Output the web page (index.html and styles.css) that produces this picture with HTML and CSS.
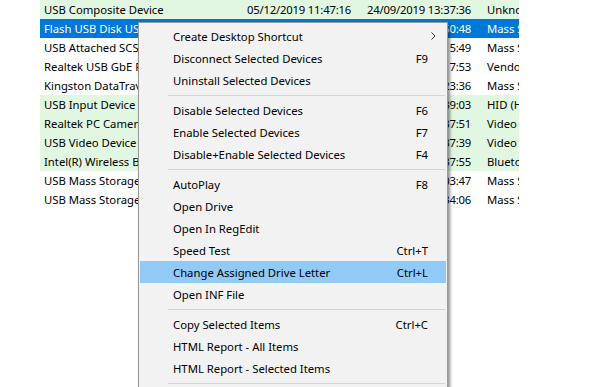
FILE: index.html
```html
<!DOCTYPE html>
<html lang="en">
<head>
    <meta charset="UTF-8">
    <title>USB Devices</title>
    <link rel="stylesheet" href="styles.css">
</head>
<body>
<div class="list">
    <div class="row green"><span class="cell">USB Composite Device</span><span class="cell date">05/12/2019 11:47:16</span><span class="cell date">24/09/2019 13:37:36</span><span class="cell">Unknown</span></div>
    <div class="row selected"><span class="cell">Flash USB Disk USB Device</span><span class="cell date">05/12/2019 11:50:40</span><span class="cell date">05/12/2019 11:50:48</span><span class="cell">Mass Storage</span></div>
    <div class="row"><span class="cell">USB Attached SCSI (UAS) Mass Storage Device</span><span class="cell date">03/12/2019 10:15:44</span><span class="cell date">03/12/2019 10:15:49</span><span class="cell">Mass Storage</span></div>
    <div class="row"><span class="cell">Realtek USB GbE Family Controller</span><span class="cell date">28/11/2019 09:17:50</span><span class="cell date">28/11/2019 09:17:53</span><span class="cell">Vendor Specific</span></div>
    <div class="row"><span class="cell">Kingston DataTraveler 3.0 USB Device</span><span class="cell date">22/11/2019 16:23:31</span><span class="cell date">22/11/2019 16:23:36</span><span class="cell">Mass Storage</span></div>
    <div class="row green"><span class="cell">USB Input Device</span><span class="cell date">05/12/2019 11:39:01</span><span class="cell date">05/12/2019 11:39:03</span><span class="cell">HID (Human Interface Device)</span></div>
    <div class="row green"><span class="cell">Realtek PC Camera</span><span class="cell date">05/12/2019 11:37:49</span><span class="cell date">05/12/2019 11:37:51</span><span class="cell">Video</span></div>
    <div class="row green"><span class="cell">USB Video Device</span><span class="cell date">05/12/2019 11:37:38</span><span class="cell date">05/12/2019 11:37:39</span><span class="cell">Video</span></div>
    <div class="row green"><span class="cell">Intel(R) Wireless Bluetooth(R)</span><span class="cell date">05/12/2019 11:37:52</span><span class="cell date">05/12/2019 11:37:55</span><span class="cell">Bluetooth Device</span></div>
    <div class="row"><span class="cell">USB Mass Storage Device</span><span class="cell date">20/11/2019 14:03:41</span><span class="cell date">20/11/2019 14:03:47</span><span class="cell">Mass Storage</span></div>
    <div class="row"><span class="cell">USB Mass Storage Device</span><span class="cell date">18/11/2019 10:34:02</span><span class="cell date">18/11/2019 10:34:06</span><span class="cell">Mass Storage</span></div>
</div>

<!-- context menu -->
<div class="menu">
    <div class="item"><span>Create Desktop Shortcut</span><svg class="arrow" width="5" height="8" viewBox="0 0 5 8"><path d="M0.5 0.5 L4 4 L0.5 7.5" fill="none" stroke="#333" stroke-width="1"/></svg></div>
    <div class="item"><span>Disconnect Selected Devices</span><span class="key">F9</span></div>
    <div class="item"><span>Uninstall Selected Devices</span></div>
    <div class="sep"></div>
    <div class="item"><span>Disable Selected Devices</span><span class="key">F6</span></div>
    <div class="item"><span>Enable Selected Devices</span><span class="key">F7</span></div>
    <div class="item"><span>Disable+Enable Selected Devices</span><span class="key">F4</span></div>
    <div class="sep"></div>
    <div class="item"><span>AutoPlay</span><span class="key">F8</span></div>
    <div class="item"><span>Open Drive</span></div>
    <div class="item"><span>Open In RegEdit</span></div>
    <div class="item"><span>Speed Test</span><span class="key">Ctrl+T</span></div>
    <div class="item hover"><span>Change Assigned Drive Letter</span><span class="key">Ctrl+L</span></div>
    <div class="item"><span>Open INF File</span></div>
    <div class="sep"></div>
    <div class="item"><span>Copy Selected Items</span><span class="key">Ctrl+C</span></div>
    <div class="item"><span>HTML Report - All Items</span></div>
    <div class="item"><span>HTML Report - Selected Items</span></div>
    <div class="sep"></div>
</div>
</body>
</html>
```

FILE: styles.css
```css
*{
    margin: 0;
    padding: 0;
    box-sizing: border-box;
}
body{
    background: #fff;
    font-family: "Noto Sans", "Liberation Sans", sans-serif;
    font-size: 11.3px;
    color: #000;
    overflow: hidden;
}
/*设备列表*/
.list{
    margin-left: 40px;
    width: 479px;
    overflow: hidden;
}
.row{
    display: grid;
    grid-template-columns: 203px 120px 120px 36px;
    height: 19px;
    line-height: 19px;
}
.row.green{
    background: #e2f7e2;
}
.row.selected{
    background: #0078d7;
    color: #fff;
}
.cell{
    padding-left: 4px;
    white-space: nowrap;
    overflow: hidden;
}
.date{
    letter-spacing: -0.2px;
}
/*右键菜单*/
.menu{
    position: absolute;
    left: 138px;
    top: 22px;
    width: 310px;
    padding: 2px 1px;
    background: #f2f2f2;
    border: 1px solid #999;
    box-shadow: 2px 2px 3px rgba(0,0,0,.45);
}
.item{
    height: 22px;
    display: flex;
    align-items: center;
    justify-content: space-between;
    padding: 0 18px 0 33px;
    white-space: nowrap;
}
.item.hover{
    background: #91c9f7;
}
.arrow{
    margin-right: -8px;
}
.sep{
    height: 1px;
    background: #d4d4d4;
    margin: 4px 1px 3px 28px;
}
```
